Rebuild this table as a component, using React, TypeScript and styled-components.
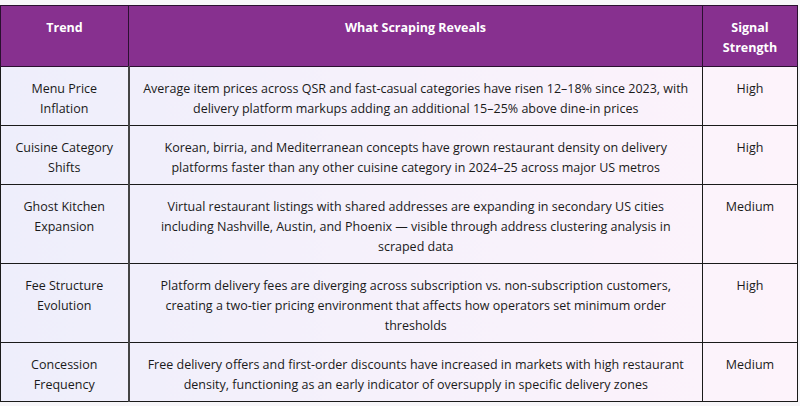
import styled, { createGlobalStyle } from 'styled-components';

const Global = createGlobalStyle`
  html, body {
    margin: 0;
    padding: 0;
    background: #f7f6f9;
  }
  body {
    font-family: "Open Sans", "Noto Sans", Arial, sans-serif;
  }
`;

const Page = styled.div`
  padding: 5px 3px 4px 0;
`;

const Table = styled.table`
  width: 797px;
  border-collapse: collapse;
  table-layout: fixed;
  background: linear-gradient(90deg, #eeeefb 0%, #f6f1fb 50%, #fdf3fb 100%);
  font-size: 12.5px;
  color: #1a1a1a;
`;

const Col = styled.col<{ $w: number }>`
  width: ${({ $w }) => $w}px;
`;

const Head = styled.th`
  box-sizing: border-box;
  background: #87308f;
  color: #fff;
  font-weight: 700;
  line-height: 20px;
  padding: 12px 6px 8px;
  vertical-align: top;
  text-align: center;
  border: 1px solid #2a1030;
`;

const Cell = styled.td`
  box-sizing: border-box;
  line-height: 20px;
  padding: 12px 4px 6px;
  vertical-align: top;
  text-align: center;
  border: 1px solid #1a1a1a;
  white-space: nowrap;

  &:first-child {
    border-right: 2px solid #444;
  }
`;

type Row = { trend: string[]; reveals: string[]; signal: string };

const rows: Row[] = [
  {
    trend: ['Menu Price', 'Inflation'],
    reveals: [
      'Average item prices across QSR and fast-casual categories have risen 12–18% since 2023, with',
      'delivery platform markups adding an additional 15–25% above dine-in prices',
    ],
    signal: 'High',
  },
  {
    trend: ['Cuisine Category', 'Shifts'],
    reveals: [
      'Korean, birria, and Mediterranean concepts have grown restaurant density on delivery',
      'platforms faster than any other cuisine category in 2024–25 across major US metros',
    ],
    signal: 'High',
  },
  {
    trend: ['Ghost Kitchen', 'Expansion'],
    reveals: [
      'Virtual restaurant listings with shared addresses are expanding in secondary US cities',
      'including Nashville, Austin, and Phoenix — visible through address clustering analysis in',
      'scraped data',
    ],
    signal: 'Medium',
  },
  {
    trend: ['Fee Structure', 'Evolution'],
    reveals: [
      'Platform delivery fees are diverging across subscription vs. non-subscription customers,',
      'creating a two-tier pricing environment that affects how operators set minimum order',
      'thresholds',
    ],
    signal: 'High',
  },
  {
    trend: ['Concession', 'Frequency'],
    reveals: [
      'Free delivery offers and first-order discounts have increased in markets with high restaurant',
      'density, functioning as an early indicator of oversupply in specific delivery zones',
    ],
    signal: 'Medium',
  },
];

function Lines({ lines }: { lines: string[] }) {
  return (
    <>
      {lines.map((l, i) => (
        <span key={i}>
          {i > 0 && <br />}
          {l}
        </span>
      ))}
    </>
  );
}

export default function App() {
  return (
    <Page>
      <Global />
      <Table>
        <colgroup>
          <Col $w={128} />
          <Col $w={574} />
          <Col $w={95} />
        </colgroup>
        <thead>
          <tr>
            <Head>Trend</Head>
            <Head>What Scraping Reveals</Head>
            <Head>
              Signal
              <br />
              Strength
            </Head>
          </tr>
        </thead>
        <tbody>
          {rows.map((r) => (
            <tr key={r.signal + r.trend[0]}>
              <Cell>
                <Lines lines={r.trend} />
              </Cell>
              <Cell>
                <Lines lines={r.reveals} />
              </Cell>
              <Cell>{r.signal}</Cell>
            </tr>
          ))}
        </tbody>
      </Table>
    </Page>
  );
}
